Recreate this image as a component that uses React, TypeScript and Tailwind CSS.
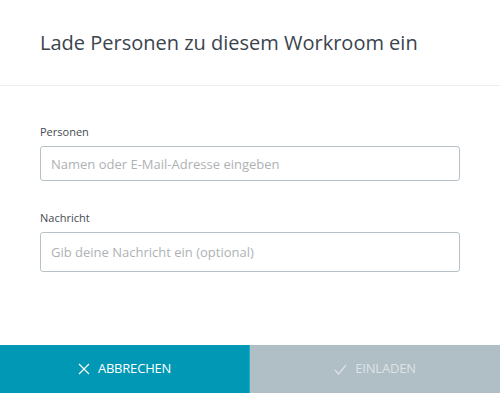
import React from "react";

export default function App() {
  return (
    <div className="w-[500px] h-[393px] bg-white flex flex-col" style={{ fontFamily: '"Open Sans", sans-serif' }}>
      <div className="h-[86px] border-b border-[#ececec] flex items-center pl-[40px] pt-[1px]">
        <h1 className="text-[20px] leading-none text-[#3a444d] font-normal">Lade Personen zu diesem Workroom ein</h1>
      </div>
      <div className="flex-1 flex flex-col px-[40px] pt-[39px]">
        <label className="text-[11px] leading-[14px] text-[#444b52]">Personen</label>
        <input
          className="mt-[7px] w-[420px] h-[35px] border border-[#b7c2c8] rounded-[3px] px-[10px] text-[13px] text-[#333] placeholder:text-[#aeb2b5] outline-none"
          placeholder="Namen oder E-Mail-Adresse eingeben"
        />
        <label className="mt-[30px] text-[11px] leading-[14px] text-[#444b52]">Nachricht</label>
        <input
          className="mt-[7px] w-[420px] h-[40px] border border-[#b7c2c8] rounded-[3px] px-[10px] text-[13px] text-[#333] placeholder:text-[#aeb2b5] outline-none"
          placeholder="Gib deine Nachricht ein (optional)"
        />
      </div>
      <div className="h-[48px] flex">
        <button className="w-[250px] h-full bg-[#0098b4] border-r border-[#19b3cf] flex items-center justify-center gap-[8px] text-white text-[13px]">
          <svg width="12" height="12" viewBox="0 0 12 12" fill="none" stroke="white" strokeWidth="1.2">
            <path d="M1 1 L11 11 M11 1 L1 11" />
          </svg>
          <span className="tracking-[-0.2px]">ABBRECHEN</span>
        </button>
        <button className="flex-1 h-full bg-[#b0bec5] flex items-center justify-center gap-[8px] text-[#dde3e6] text-[13px]">
          <svg width="13" height="11" viewBox="0 0 13 11" fill="none" stroke="#dde3e6" strokeWidth="1.2">
            <path d="M1 6 L4.5 10 L12 1" />
          </svg>
          <span className="tracking-[-0.2px]">EINLADEN</span>
        </button>
      </div>
    </div>
  );
}
